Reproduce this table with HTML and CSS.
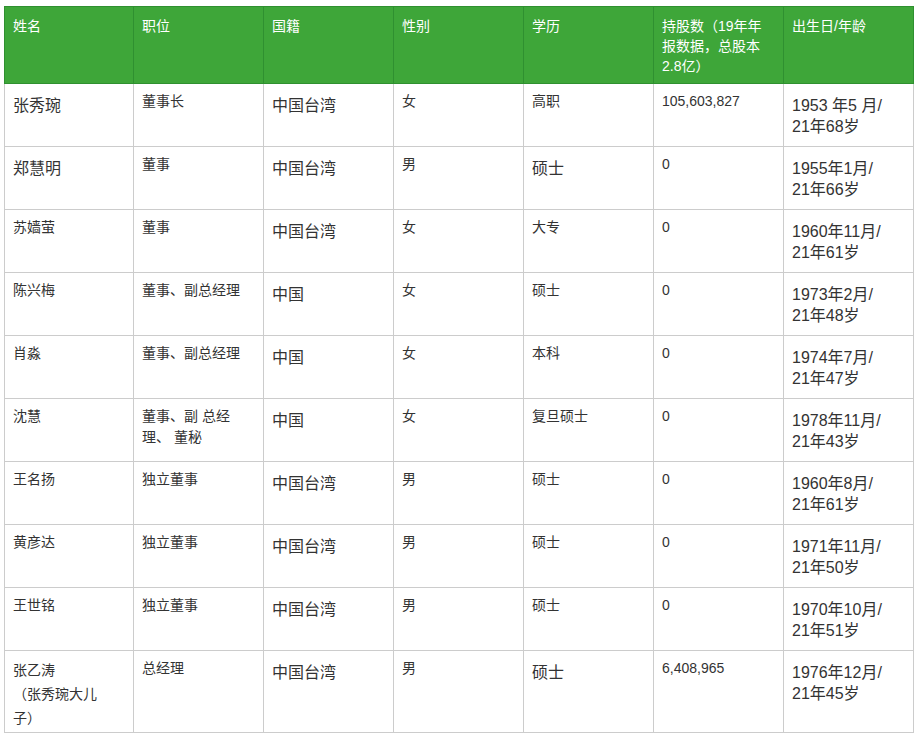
FILE: index.html
```html
<!DOCTYPE html>
<html lang="zh-CN">
<head>
<meta charset="utf-8">
<title>董事会成员</title>
<link rel="stylesheet" href="styles.css">
</head>
<body>
<table class="board">
  <colgroup>
    <col class="c1"><col class="c"><col class="c"><col class="c"><col class="c"><col class="c"><col class="c">
  </colgroup>
  <thead>
    <tr>
      <th>姓名</th><th>职位</th><th>国籍</th><th>性别</th><th>学历</th><th>持股数（19年年报数据，总股本2.8亿）</th><th>出生日/年龄</th>
    </tr>
  </thead>
  <tbody>
    <tr>
      <td class="lg">张秀琬</td><td class="sm">董事长</td><td class="lg">中国台湾</td><td class="sm">女</td><td class="sm">高职</td><td class="sm">105,603,827</td><td class="lg">1953 年5 月/<br>21年68岁</td>
    </tr>
    <tr>
      <td class="lg">郑慧明</td><td class="sm">董事</td><td class="lg">中国台湾</td><td class="sm">男</td><td class="lg">硕士</td><td class="sm">0</td><td class="lg">1955年1月/<br>21年66岁</td>
    </tr>
    <tr>
      <td class="sm">苏嫱萤</td><td class="sm">董事</td><td class="lg">中国台湾</td><td class="sm">女</td><td class="sm">大专</td><td class="sm">0</td><td class="lg">1960年11月/<br>21年61岁</td>
    </tr>
    <tr>
      <td class="sm">陈兴梅</td><td class="sm">董事、副总经理</td><td class="lg">中国</td><td class="sm">女</td><td class="sm">硕士</td><td class="sm">0</td><td class="lg">1973年2月/<br>21年48岁</td>
    </tr>
    <tr>
      <td class="sm">肖淼</td><td class="sm">董事、副总经理</td><td class="lg">中国</td><td class="sm">女</td><td class="sm">本科</td><td class="sm">0</td><td class="lg">1974年7月/<br>21年47岁</td>
    </tr>
    <tr>
      <td class="sm">沈慧</td><td class="sm">董事、副 总经理、 董秘</td><td class="lg">中国</td><td class="sm">女</td><td class="sm">复旦硕士</td><td class="sm">0</td><td class="lg">1978年11月/<br>21年43岁</td>
    </tr>
    <tr>
      <td class="sm">王名扬</td><td class="sm">独立董事</td><td class="lg">中国台湾</td><td class="sm">男</td><td class="sm">硕士</td><td class="sm">0</td><td class="lg">1960年8月/<br>21年61岁</td>
    </tr>
    <tr>
      <td class="sm">黄彦达</td><td class="sm">独立董事</td><td class="lg">中国台湾</td><td class="sm">男</td><td class="sm">硕士</td><td class="sm">0</td><td class="lg">1971年11月/<br>21年50岁</td>
    </tr>
    <tr>
      <td class="sm">王世铭</td><td class="sm">独立董事</td><td class="lg">中国台湾</td><td class="sm">男</td><td class="sm">硕士</td><td class="sm">0</td><td class="lg">1970年10月/<br>21年51岁</td>
    </tr>
    <tr>
      <td class="sm tall">张乙涛<br>（张秀琬大儿<br>子）</td><td class="sm">总经理</td><td class="lg">中国台湾</td><td class="sm">男</td><td class="lg">硕士</td><td class="sm">6,408,965</td><td class="lg">1976年12月/<br>21年45岁</td>
    </tr>
  </tbody>
</table>
</body>
</html>
```

FILE: styles.css
```css
html, body {
  margin: 0;
  padding: 0;
  background: #ffffff;
}

body {
  padding: 6px 0 0 4px;
  font-family: "Liberation Sans", "Noto Sans CJK SC", sans-serif;
  color: #333333;
}

.board {
  border-collapse: collapse;
  table-layout: fixed;
  width: 910px;
}

.board .c1 {
  width: 129px;
}

.board .c {
  width: 130px;
}

.board th {
  background: #3ea639;
  color: #ffffff;
  font-weight: normal;
  font-size: 14px;
  line-height: 20px;
  text-align: left;
  vertical-align: top;
  padding: 9px 10px 7px 8px;
  border: 1px solid #2f9030;
}

.board td {
  border: 1px solid #cccccc;
  vertical-align: top;
  text-align: left;
  padding-left: 8px;
  padding-right: 10px;
}

.board td.sm {
  font-size: 14px;
  line-height: 21px;
  padding-top: 7px;
  padding-bottom: 7px;
}

.board td.lg {
  font-size: 16px;
  line-height: 21px;
  padding-top: 11px;
  padding-bottom: 9px;
}

.board td.tall {
  line-height: 24px;
  padding-top: 7px;
  padding-bottom: 2px;
}
```
